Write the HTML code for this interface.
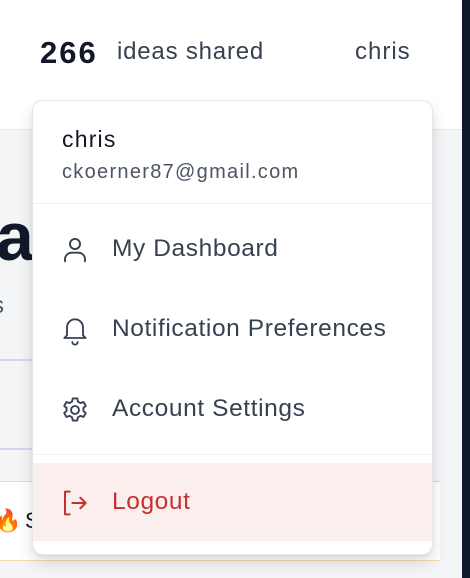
<!DOCTYPE html>
<html><head><style>
*{margin:0;padding:0;box-sizing:border-box}
body{width:470px;height:578px;overflow:hidden;background:#f4f5f7;font-family:"Liberation Sans",sans-serif;position:relative}
.hdr{position:absolute;left:0;top:0;width:462px;height:130px;background:#fff;border-bottom:1px solid #e5e7eb}
.dark{position:absolute;left:462px;top:0;width:8px;height:578px;background:#0f172a}
.t{position:absolute;white-space:nowrap}
.menu{position:absolute;left:32px;top:100px;width:401px;height:455px;background:#fff;border:1px solid #e5e7eb;border-radius:11px;box-shadow:0 8px 16px rgba(0,0,0,.12),0 2px 4px rgba(0,0,0,.06);overflow:hidden}
.item{position:absolute;left:0;width:401px;height:80px;color:#374151;font-size:24.5px;letter-spacing:0.6px}
.item svg{position:absolute;left:26px;top:24px;width:32px;height:32px}
.item span{position:absolute;left:79px;top:25px}
</style></head><body>
<div class="hdr"></div>
<div class="dark"></div>
<div class="t" style="left:40px;top:35px;font-size:31px;font-weight:bold;color:#111827;letter-spacing:2px">266</div>
<div class="t" style="left:117px;top:38px;font-size:24px;color:#374151;letter-spacing:0.8px">ideas shared</div>
<div class="t" style="left:355px;top:38px;font-size:24px;color:#374151;letter-spacing:1px">chris</div>
<div class="t" style="left:-4px;top:198px;font-size:68px;font-weight:bold;color:#111827">a</div>
<div class="t" style="left:-8px;top:292px;font-size:24px;color:#4b5563">s</div>
<div style="position:absolute;left:0;top:359px;width:40px;height:2px;background:#ddd0f5"></div>
<div style="position:absolute;left:0;top:448px;width:40px;height:2px;background:#ddd0f5"></div>
<div style="position:absolute;left:0;top:481px;width:440px;height:1px;background:#f5d9a8"></div>
<div style="position:absolute;left:0;top:560px;width:440px;height:1px;background:#f5d9a8"></div>
<div style="position:absolute;left:0;top:482px;width:440px;height:78px;background:#fff"></div>
<div class="t" style="left:-6px;top:508px;font-size:22px">🔥</div>
<div class="t" style="left:25px;top:508px;font-size:22px;color:#111827">S</div>
<div class="menu">
 <div class="t" style="left:29px;top:25px;font-size:23px;color:#111827;letter-spacing:1.2px">chris</div>
 <div class="t" style="left:29px;top:60px;font-size:20px;color:#4b5563;letter-spacing:1.3px">ckoerner87@gmail.com</div>
 <div style="position:absolute;left:0;top:102px;width:401px;height:1px;background:#eef0f2"></div>
 <div class="item" style="top:109px"><svg viewBox="0 0 24 24" fill="none" stroke="#374151" stroke-width="1.4" stroke-linecap="round"><circle cx="12" cy="7.5" r="3.8"/><path d="M4.5 20.5v-1.5a5 5 0 0 1 5-5h5a5 5 0 0 1 5 5v1.5"/></svg><span>My Dashboard</span></div>
 <div class="item" style="top:189px"><svg viewBox="0 0 24 24" fill="none" stroke="#374151" stroke-width="1.4" stroke-linecap="round" stroke-linejoin="round"><path d="M6 16V10a6 6 0 0 1 12 0v6l2 2H4z"/><path d="M10 21a2 2 0 0 0 4 0"/></svg><span>Notification Preferences</span></div>
 <div class="item" style="top:269px"><svg viewBox="0 0 24 24" fill="none" stroke="#374151" stroke-width="1.4" stroke-linejoin="round"><path d="M10.3 3.3h3.4l.5 2.4 1.9 1.1 2.3-.8 1.7 2.9-1.8 1.6v2.2l1.8 1.6-1.7 2.9-2.3-.8-1.9 1.1-.5 2.4h-3.4l-.5-2.4-1.9-1.1-2.3.8-1.7-2.9 1.8-1.6v-2.2L3.9 8.9l1.7-2.9 2.3.8 1.9-1.1z"/><circle cx="12" cy="12" r="3"/></svg><span>Account Settings</span></div>
 <div style="position:absolute;left:0;top:353px;width:401px;height:1px;background:#eef0f2"></div>
 <div class="item" style="top:362px;height:78px;background:#fbefee;color:#c53030"><svg viewBox="0 0 24 24" fill="none" stroke="#c53030" stroke-width="1.5" stroke-linecap="round" stroke-linejoin="round"><path d="M8 3.5H4.5v17H8"/><path d="M10 12h10M16 8l4 4-4 4"/></svg><span>Logout</span></div>
</div>
</body></html>
